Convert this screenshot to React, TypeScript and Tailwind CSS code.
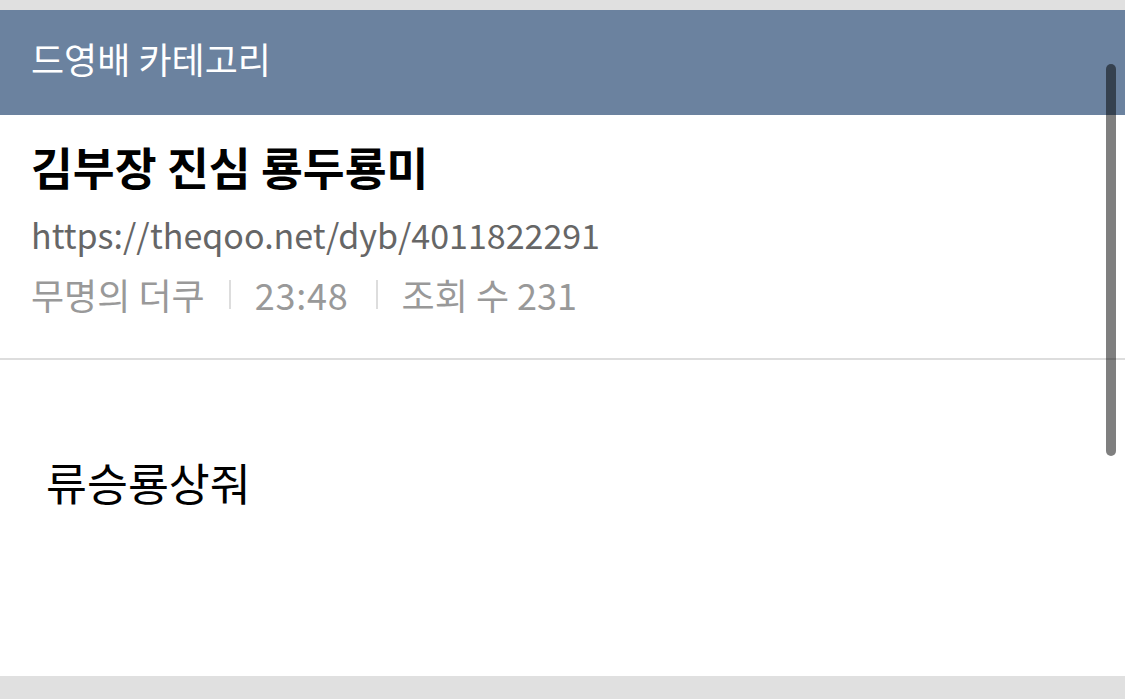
export default function App() {
  const font = { fontFamily: '"Noto Sans CJK KR", "Noto Sans", sans-serif' };
  return (
    <div className="relative flex h-[699px] w-[1125px] flex-col overflow-hidden bg-[#e0e0e0]" style={font}>
      <div className="mt-[10px] flex h-[105px] items-center bg-[#6b829f] pb-[9px] pl-[31px]">
        <span className="text-[36px] leading-none text-white">드영배 카테고리</span>
      </div>
      <div className="flex flex-col bg-white px-[31px] pt-[21px] pb-[34px]">
        <div className="text-[45.5px] font-bold leading-[60px] text-black">김부장 진심 룡두룡미</div>
        <div className="mt-[9px] text-[34px] leading-[60px] text-[#666]">https://theqoo.net/dyb/4011822291</div>
        <div className="flex h-[59px] items-center text-[36px] leading-[59px] text-[#999]">
          <span>무명의 더쿠</span>
          <span className="mx-[24px] h-[29px] w-[2px] bg-[#ddd]" />
          <span className="tracking-[0.8px]">23:48</span>
          <span className="ml-[27px] mr-[24px] h-[29px] w-[2px] bg-[#ddd]" />
          <span>조회 수 231</span>
        </div>
      </div>
      <div className="h-[2px] bg-[#ddd]" />
      <div className="flex h-[316px] flex-col bg-white pl-[46px] pt-[92px]">
        <span className="text-[44.5px] leading-[60px] text-black">류승룡상줘</span>
      </div>
      <div className="absolute left-[1106px] top-[64px] h-[392px] w-[10px] rounded-full bg-[rgba(0,0,0,0.5)]" />
    </div>
  );
}
